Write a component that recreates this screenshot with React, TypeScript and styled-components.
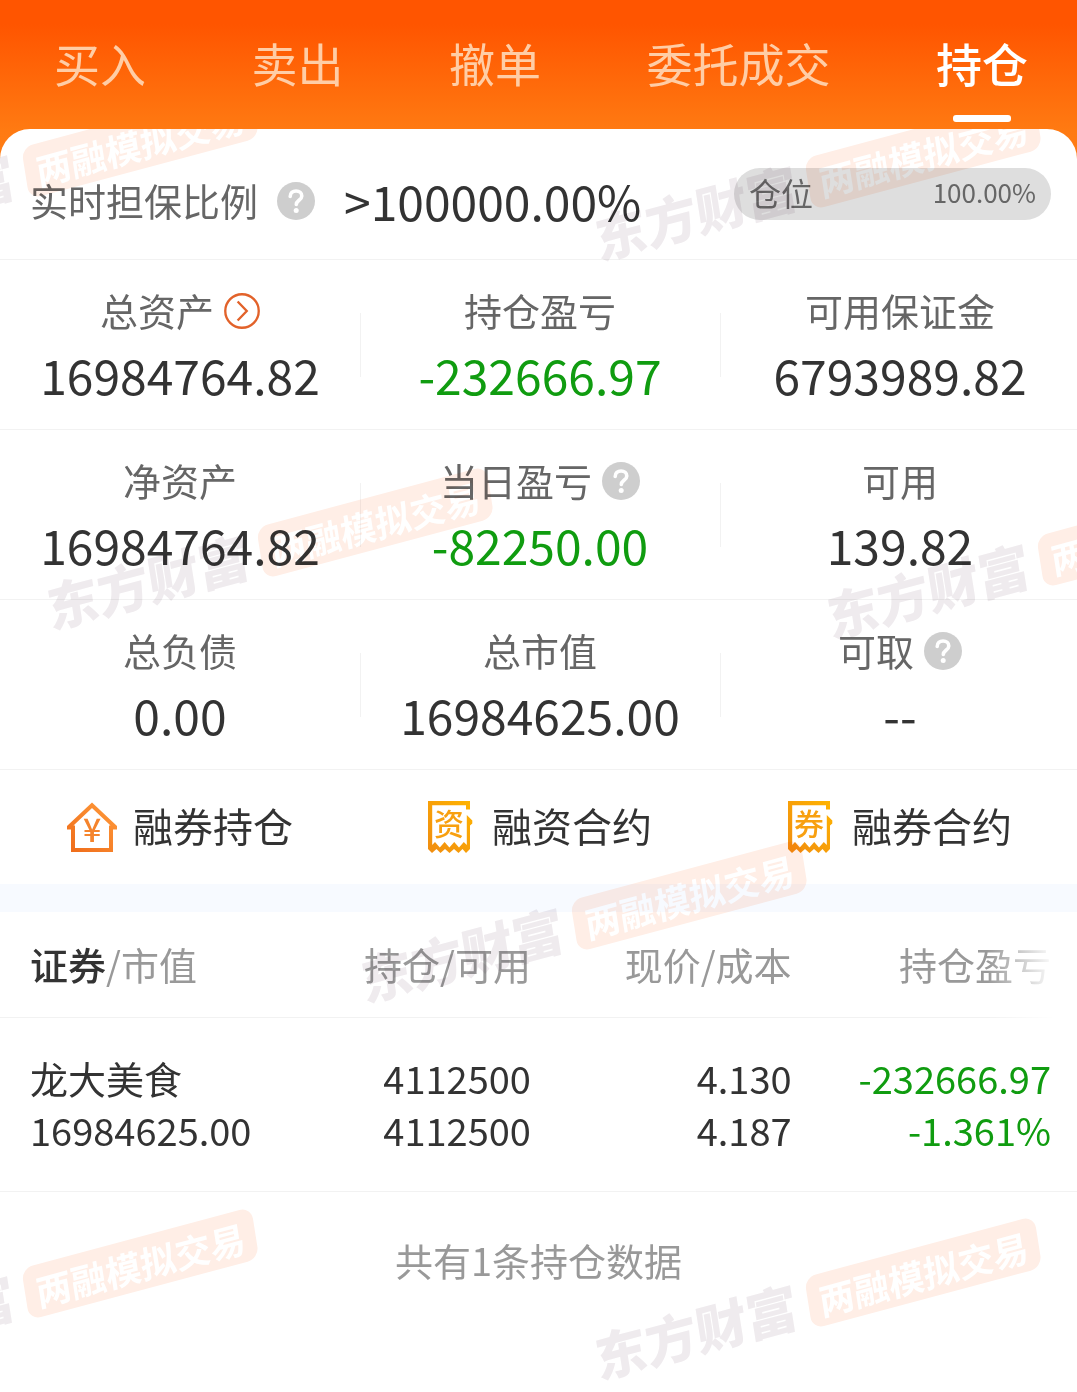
import React from 'react';
import styled, { createGlobalStyle } from 'styled-components';

const GlobalStyle = createGlobalStyle`
  *, *::before, *::after { box-sizing: border-box; }
  body {
    margin: 0;
    background: #fff;
    color: #333;
    font-family: 'Noto Sans CJK SC', 'Noto Sans', sans-serif;
  }
  button {
    margin: 0;
    padding: 0;
    border: 0;
    background: none;
    font: inherit;
    color: inherit;
    cursor: pointer;
  }
`;

const Page = styled.div`
  display: flex;
  flex-direction: column;
  min-height: 100vh;
  background: linear-gradient(#ff5500 0, #ff5500 24px, #ff7a12 130px, #ff8018 180px);
`;

const Tabs = styled.nav`
  display: flex;
  justify-content: space-between;
  padding: 30px 49px 7px 54px;
`;

const Tab = styled.button<{ $active?: boolean }>`
  display: flex;
  flex-direction: column;
  align-items: center;
  gap: 21px;
  font-size: 46px;
  line-height: 64px;
  font-weight: ${(p) => (p.$active ? 500 : 400)};
  color: ${(p) => (p.$active ? '#fff' : '#ffcda6')};

  &::after {
    content: '';
    width: 58px;
    height: 7px;
    border-radius: 3px;
    background: ${(p) => (p.$active ? '#fff' : 'transparent')};
  }
`;

const Panel = styled.main`
  position: relative;
  flex: 1;
  overflow: hidden;
  border-radius: 30px 30px 0 0;
  background: #fff;
`;

const RatioRow = styled.section`
  display: flex;
  align-items: center;
  padding: 39px 26px 27px 30px;
  border-bottom: 1px solid #f2f2f2;
`;

const Label = styled.span`
  font-size: 38px;
  line-height: 48px;
  color: #666;
`;

const RatioHelp = styled.div`
  display: flex;
  margin: 0 29px 0 19px;
`;

const Value = styled.span<{ $down?: boolean }>`
  font-size: 48px;
  line-height: 60px;
  color: ${(p) => (p.$down ? '#109c10' : '#333')};
`;

const PositionPill = styled.div`
  display: flex;
  flex: 0 1 317px;
  align-items: center;
  justify-content: space-between;
  height: 52px;
  margin: 0 0 12px auto;
  padding: 0 15px 4px;
  border-radius: 26px;
  background: #dedede;
  color: #666;
  font-size: 32px;
  line-height: 48px;
`;

const PillValue = styled.span`
  font-size: 26px;
`;

const StatRow = styled.section`
  display: grid;
  grid-template-columns: repeat(3, 1fr);
  align-items: center;
  margin-right: -3px;
  border-bottom: 1px solid #f2f2f2;
`;

const Stat = styled.div`
  position: relative;
  display: flex;
  flex-direction: column;
  align-items: center;
  gap: 10px;
  padding: 26px 0 25px;

  & + &::before {
    content: '';
    position: absolute;
    left: 0;
    top: 53px;
    width: 1px;
    height: 64px;
    background: #f2f2f2;
  }
`;

const StatHead = styled.div`
  display: flex;
  align-items: center;
  gap: 10px;
`;

const IconButton = styled.button`
  display: flex;
  padding-top: 2px;
`;

const Shortcuts = styled.nav`
  display: grid;
  grid-template-columns: repeat(3, 1fr);
  margin-right: -3px;
`;

const Shortcut = styled.button`
  display: flex;
  align-items: center;
  justify-content: center;
  gap: 16px;
  height: 114px;
`;

const ShortcutText = styled.span`
  padding-bottom: 4px;
  font-size: 40px;
  line-height: 52px;
`;

const Band = styled.div`
  height: 28px;
  background: #f7faff;
`;

const Holdings = styled.table`
  width: 100%;
  border-collapse: separate;
  border-spacing: 0;
  table-layout: fixed;
  font-size: 38px;
`;

const Col = styled.col<{ $width: string }>`
  width: ${(p) => p.$width};
`;

const HeadCell = styled.th`
  position: relative;
  padding: 28px 0 29px;
  border-bottom: 1px solid #f2f2f2;
  line-height: 48px;
  font-weight: 400;
  text-align: right;
  white-space: nowrap;
  color: #999;

  &:first-child {
    padding-left: 30px;
    text-align: left;
  }

  &:last-child {
    padding-right: 26px;
  }

  &:last-child::after {
    content: '';
    position: absolute;
    top: 0;
    right: 0;
    bottom: -1px;
    width: 90px;
    background: linear-gradient(to right, rgba(255, 255, 255, 0), #fff 68px);
  }
`;

const Strong = styled.span`
  font-weight: 500;
  color: #333;
`;

const Cell = styled.td<{ $down?: boolean }>`
  padding: 34px 0 35px;
  border-bottom: 1px solid #f2f2f2;
  line-height: 52px;
  text-align: right;
  white-space: nowrap;
  color: ${(p) => (p.$down ? '#109c10' : '#333')};

  &:first-child {
    padding-left: 30px;
    text-align: left;
  }

  &:last-child {
    padding-right: 26px;
  }
`;

const Line = styled.div``;

const Summary = styled.p`
  margin: 0;
  padding: 44px 0 84px;
  text-align: center;
  font-size: 38px;
  line-height: 48px;
  color: #999;
`;

const WatermarkLayer = styled.div`
  position: absolute;
  inset: 0;
  overflow: hidden;
  pointer-events: none;
  mix-blend-mode: multiply;
`;

const Mark = styled.div<{ $x: number; $y: number }>`
  position: absolute;
  left: ${(p) => p.$x}px;
  top: ${(p) => p.$y}px;
  display: flex;
  align-items: center;
  gap: 12px;
  white-space: nowrap;
  transform: translate(-50%, -50%) rotate(-15deg) skewX(-6deg);
`;

const Brand = styled.span`
  padding-bottom: 6px;
  font-size: 52px;
  line-height: 52px;
  font-weight: 900;
  color: #efebee;
`;

const Badge = styled.span`
  padding: 0 11px;
  border-radius: 12px;
  background: #ffeee6;
  font-size: 36px;
  line-height: 52px;
  font-weight: 700;
  color: #fff;
`;

const HelpIcon = () => (
  <svg width="38" height="38" viewBox="0 0 38 38" aria-hidden="true">
    <circle cx="19" cy="19" r="19" fill="#cecece" />
    <path
      d="M13.2 14.4c0-3.4 2.5-5.4 5.9-5.4 3.300 0 5.700 2 5.700 4.900 0 4.300-5.500 4.400-5.500 8.600"
      fill="none"
      stroke="#fff"
      strokeWidth="3.6"
      strokeLinecap="round"
    />
    <circle cx="19.2" cy="28.6" r="2.5" fill="#fff" />
  </svg>
);

const ArrowIcon = () => (
  <svg width="36" height="36" viewBox="0 0 37 37" fill="none" stroke="#e2622a" aria-hidden="true">
    <circle cx="18.5" cy="18.5" r="17.2" strokeWidth="2.4" />
    <path d="M14 8.700l9.400 9.800-9.400 9.800" strokeWidth="2.4" />
  </svg>
);

const HouseIcon = () => (
  <svg width="50" height="50" viewBox="0 0 50 50" fill="none" aria-hidden="true">
    <defs>
      <linearGradient id="house" x1="0" y1="1" x2="1" y2="0">
        <stop offset="0" stopColor="#ef6c1a" />
        <stop offset="1" stopColor="#ff9a3a" />
      </linearGradient>
    </defs>
    <path d="M1.400 25.500L25 3.200 48.600 25.500H44V48H6V25.500z" stroke="url(#house)" strokeWidth="4" />
    <text x="25" y="40" textAnchor="middle" fontSize="32" fontWeight="500" fill="#f5842c">
      ¥
    </text>
  </svg>
);

const ReceiptIcon = ({ id, mark }: { id: string; mark: string }) => (
  <svg width="48" height="54" viewBox="0 0 48 54" fill="none" aria-hidden="true">
    <defs>
      <linearGradient id={id} x1="0" y1="1" x2="1" y2="0">
        <stop offset="0" stopColor="#f08c10" />
        <stop offset="1" stopColor="#ffb400" />
      </linearGradient>
    </defs>
    <path
      d="M0 1h42v8.500h-4V5.200H4.200V45l2.800-3 4.800 5.500 4.800-5.500 4.800 5.500 4.800-5.500 4.800 5.500 4.800-5.500 3 3V15l5.500 5.500v3L42 25.500V49l-4 4-3.500-4-4 4-4.500-4-4.500 4-4.500-4-4.500 4-4-4-4.500 4L0 49z"
      fill={`url(#${id})`}
    />
    <text x="21" y="35" textAnchor="middle" fontSize="30" fontWeight="500" fill="#f8a010">
      {mark}
    </text>
  </svg>
);

const Help = ({ name }: { name: string }) => (
  <IconButton type="button" aria-label={name}>
    <HelpIcon />
  </IconButton>
);

type StatItem = { label: string; value: string; down?: boolean; icon?: 'help' | 'arrow' };

const stats: StatItem[][] = [
  [
    { label: '总资产', value: '16984764.82', icon: 'arrow' },
    { label: '持仓盈亏', value: '-232666.97', down: true },
    { label: '可用保证金', value: '6793989.82' },
  ],
  [
    { label: '净资产', value: '16984764.82' },
    { label: '当日盈亏', value: '-82250.00', down: true, icon: 'help' },
    { label: '可用', value: '139.82' },
  ],
  [
    { label: '总负债', value: '0.00' },
    { label: '总市值', value: '16984625.00' },
    { label: '可取', value: '--', icon: 'help' },
  ],
];

const tabs = ['买入', '卖出', '撤单', '委托成交', '持仓'];

const marks = [
  { x: 34, y: 42 },
  { x: 817, y: 53 },
  { x: 269, y: 422 },
  { x: 1049, y: 431 },
  { x: 583, y: 795 },
  { x: 34, y: 1163 },
  { x: 817, y: 1172 },
];

export default function App() {
  return (
    <Page>
      <GlobalStyle />
      <Tabs>
        {tabs.map((t) => (
          <Tab key={t} type="button" $active={t === '持仓'}>
            {t}
          </Tab>
        ))}
      </Tabs>
      <Panel>
        <RatioRow>
          <Label>实时担保比例</Label>
          <RatioHelp>
            <Help name="实时担保比例" />
          </RatioHelp>
          <Value>&gt;100000.00%</Value>
          <PositionPill>
            <span>仓位</span>
            <PillValue>100.00%</PillValue>
          </PositionPill>
        </RatioRow>

        {stats.map((row) => (
          <StatRow key={row[0].label}>
            {row.map((s) => (
              <Stat key={s.label}>
                <StatHead>
                  <Label>{s.label}</Label>
                  {s.icon === 'help' && <Help name={s.label} />}
                  {s.icon === 'arrow' && (
                    <IconButton type="button" aria-label={s.label}>
                      <ArrowIcon />
                    </IconButton>
                  )}
                </StatHead>
                <Value $down={s.down}>{s.value}</Value>
              </Stat>
            ))}
          </StatRow>
        ))}

        <Shortcuts>
          <Shortcut type="button">
            <HouseIcon />
            <ShortcutText>融券持仓</ShortcutText>
          </Shortcut>
          <Shortcut type="button">
            <ReceiptIcon id="receipt-fund" mark="资" />
            <ShortcutText>融资合约</ShortcutText>
          </Shortcut>
          <Shortcut type="button">
            <ReceiptIcon id="receipt-stock" mark="券" />
            <ShortcutText>融券合约</ShortcutText>
          </Shortcut>
        </Shortcuts>
        <Band />

        <Holdings>
          <colgroup>
            <Col $width="25%" />
            <Col $width="24.3%" />
            <Col $width="24.2%" />
            <Col $width="26.5%" />
          </colgroup>
          <thead>
            <tr>
              <HeadCell scope="col">
                <Strong>证券</Strong>/市值
              </HeadCell>
              <HeadCell scope="col">持仓/可用</HeadCell>
              <HeadCell scope="col">现价/成本</HeadCell>
              <HeadCell scope="col">持仓盈亏</HeadCell>
            </tr>
          </thead>
          <tbody>
            <tr>
              <Cell>
                <Line>龙大美食</Line>
                <Line>16984625.00</Line>
              </Cell>
              <Cell>
                <Line>4112500</Line>
                <Line>4112500</Line>
              </Cell>
              <Cell>
                <Line>4.130</Line>
                <Line>4.187</Line>
              </Cell>
              <Cell $down>
                <Line>-232666.97</Line>
                <Line>-1.361%</Line>
              </Cell>
            </tr>
          </tbody>
        </Holdings>
        <Summary>共有1条持仓数据</Summary>

        <WatermarkLayer aria-hidden="true">
          {marks.map((m) => (
            <Mark key={`${m.x}-${m.y}`} $x={m.x} $y={m.y}>
              <Brand>东方财富</Brand>
              <Badge>两融模拟交易</Badge>
            </Mark>
          ))}
        </WatermarkLayer>
      </Panel>
    </Page>
  );
}
